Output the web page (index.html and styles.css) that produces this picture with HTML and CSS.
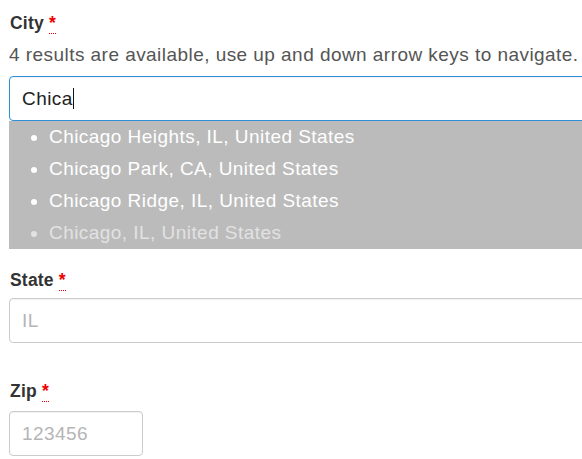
FILE: index.html
```html
<!DOCTYPE html>
<html lang="en">
<head>
<meta charset="utf-8">
<title>Address form</title>
<link rel="stylesheet" href="styles.css">
</head>
<body>
<form class="form">
  <div class="field field-city">
    <label class="label" for="city">City <abbr class="req" title="required">*</abbr></label>
    <div class="status">4 results are available, use up and down arrow keys to navigate.</div>
    <div class="input input-focus"><span class="value">Chica</span><span class="caret"></span></div>
    <ul class="menu">
      <li>Chicago Heights, IL, United States</li>
      <li>Chicago Park, CA, United States</li>
      <li>Chicago Ridge, IL, United States</li>
      <li class="dim">Chicago, IL, United States</li>
    </ul>
  </div>
  <div class="field">
    <label class="label" for="state">State <abbr class="req" title="required">*</abbr></label>
    <div class="input"><span class="ph">IL</span></div>
  </div>
  <div class="field field-zip">
    <label class="label" for="zip">Zip <abbr class="req" title="required">*</abbr></label>
    <div class="input input-zip"><span class="ph">123456</span></div>
  </div>
</form>
</body>
</html>
```

FILE: styles.css
```css
html, body {
  margin: 0;
  padding: 0;
  background: #fff;
  overflow: hidden;
}
body {
  font-family: "Liberation Sans", Arial, sans-serif;
  color: #333;
}
.form {
  padding: 11px 0 0 9px;
  width: 578px;
}
.field {
  margin-bottom: 36px;
}
.field-city {
  margin-bottom: 19px;
}
.field-zip {
  margin-bottom: 0;
}
.field-zip .label {
  margin-bottom: 8px;
}
.label {
  display: block;
  font-size: 17.5px;
  letter-spacing: 0.2px;
  font-weight: bold;
  line-height: 24px;
  padding-left: 1px;
  margin-bottom: 6px;
}
.req {
  color: #e00;
  text-decoration: none;
  border-bottom: 1px dotted #e00;
  font-weight: bold;
}
.status {
  font-size: 19px;
  letter-spacing: 0.45px;
  line-height: 24px;
  color: #555;
  margin: 8px 0 9px;
  white-space: nowrap;
}
.input {
  box-sizing: border-box;
  height: 45px;
  border: 1px solid #ccc;
  border-radius: 4px;
  padding: 0 12px;
  display: flex;
  align-items: center;
  font-size: 19px;
  letter-spacing: 0.45px;
  box-shadow: inset 0 1px 1px rgba(0,0,0,0.06);
}
.input-focus {
  border-color: #2f8fd8;
  color: #222;
}
.caret {
  display: inline-block;
  width: 1px;
  height: 21px;
  background: #111;
}
.ph {
  color: #b5b5b5;
}
.input-zip {
  width: 134px;
}
.menu {
  list-style: disc;
  margin: 0;
  padding: 0 0 0 40px;
  background: #bbbbbb;
  color: #fff;
  font-size: 19px;
  letter-spacing: 0.45px;
  line-height: 32px;
}
.menu li.dim {
  color: #e2e2e2;
}
```
